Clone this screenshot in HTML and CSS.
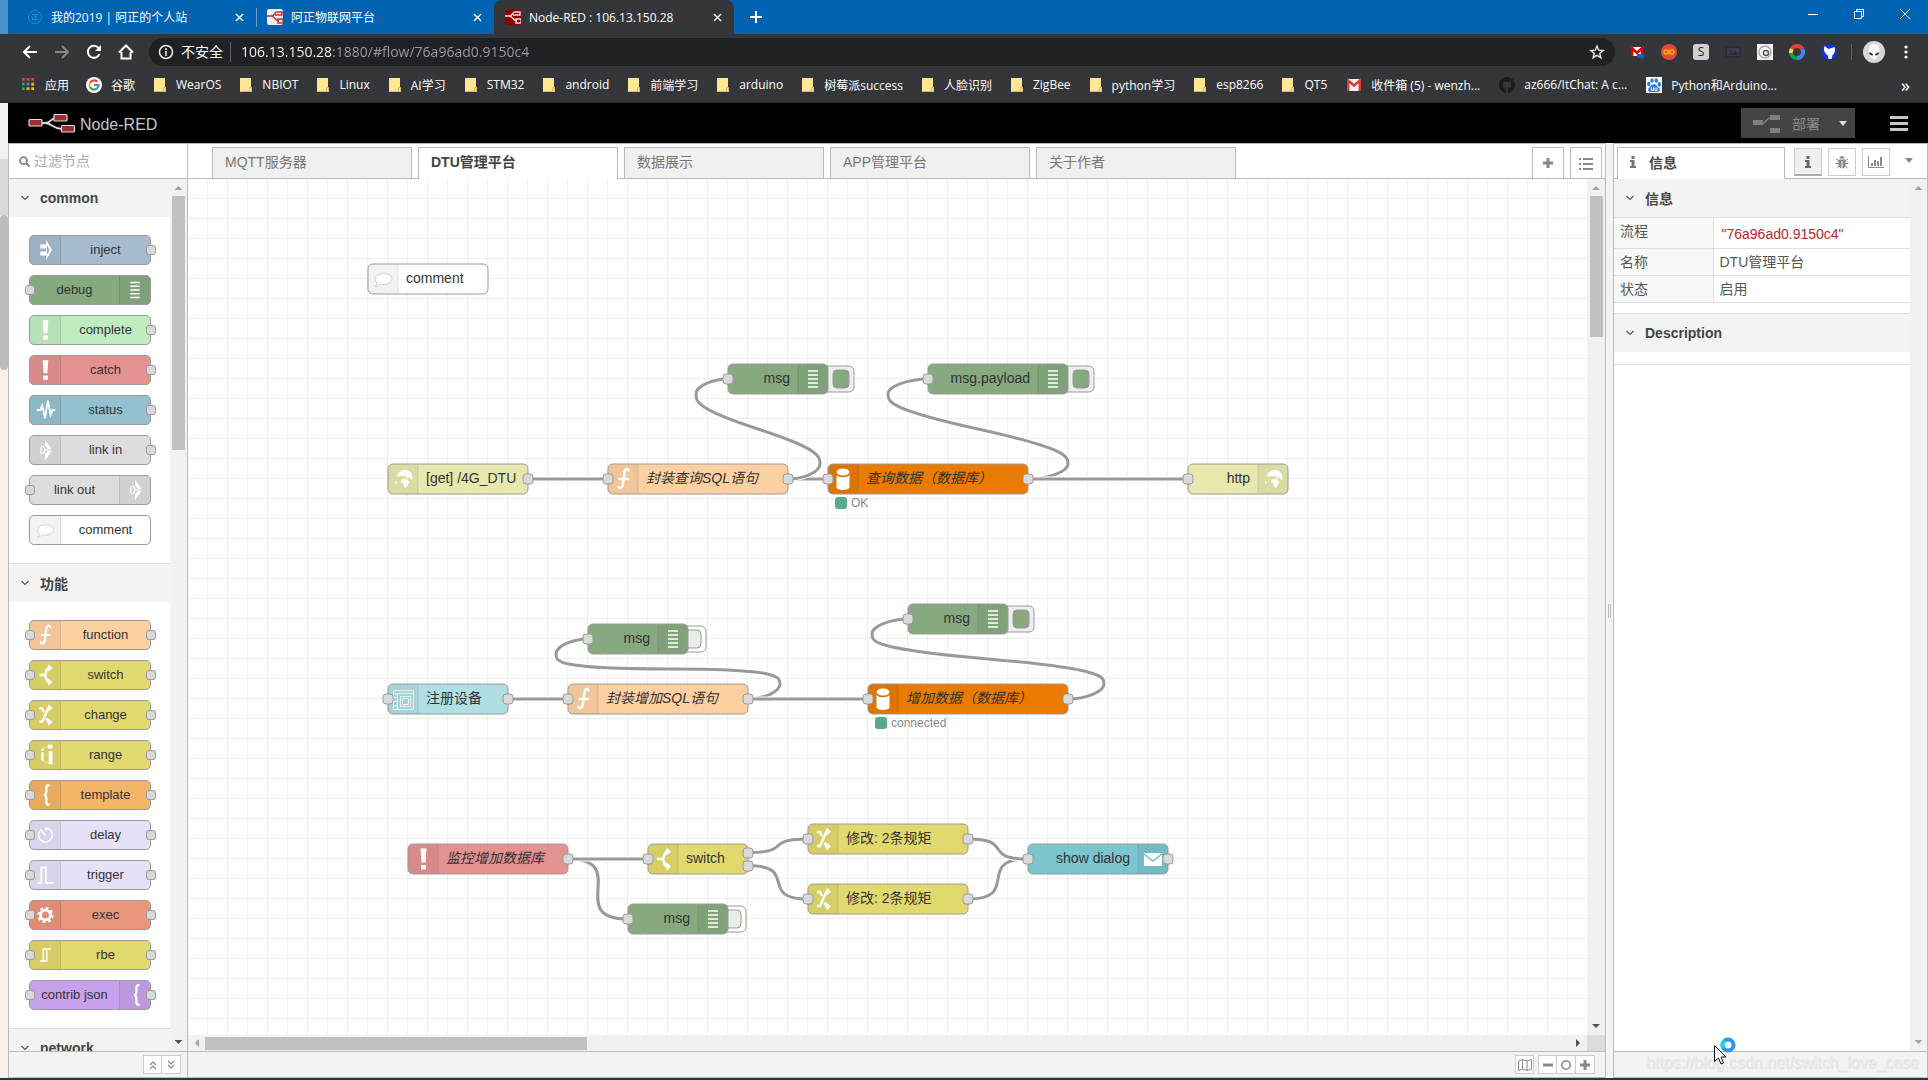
FILE: index.html
```html
<!DOCTYPE html>
<html lang="zh-CN">
  <head>
    <meta charset="UTF-8" />
    <meta name="viewport" content="width=device-width, initial-scale=1.0" />
    <title>Node-RED : 106.13.150.28</title>
    <link rel="stylesheet" href="styles.css">
  </head>
  <body>
    <!-- icon sprite -->
    <svg class="sprite" xmlns="http://www.w3.org/2000/svg">
      <symbol id="i-inject" viewBox="0 0 30 30">
        <path fill="#fff" fill-rule="evenodd" d="M10 9h6V4l6.500 11L16 26v-5h-6v-4.500h6v-3h-6zM17 10v10l3-5z" />
      </symbol>
      <symbol id="i-debug" viewBox="0 0 30 30">
        <path stroke="#fff" stroke-width="1.500" d="M10 7h10M10 11h10M10 15h10M10 19h10M10 23h10" />
      </symbol>
      <symbol id="i-alert" viewBox="0 0 30 30">
        <path fill="#fff" d="M12.500 4.500h6l-1 14h-4zM13 21h5v4.500h-5z" />
      </symbol>
      <symbol id="i-status" viewBox="0 0 30 30">
        <path fill="none" stroke="#fff" stroke-width="2" d="M6 15h4l2-5 3 14 3-19 3 15 2-5h3" />
      </symbol>
      <symbol id="i-link" viewBox="0 0 30 30">
        <path fill="#fff" d="M15 4l7 10h-4c-.5-1.500-1.500-2.500-3-3.500zM15 26l7-10h-4c-.5 1.500-1.500 2.500-3 3.500z" />
        <path fill="none" stroke="#fff" stroke-width="1.300" d="M10.500 11c3 0 4.500 1.500 4.500 4s-1.500 4-4.500 4M10.500 12v6M15 15h6" />
      </symbol>
      <symbol id="i-comment" viewBox="0 0 30 30">
        <path fill="#fff" stroke="#ccc" d="M15.500 9.500c5 0 8.500 2.300 8.500 5.500s-3.500 5.500-8.500 5.500c-1.300 0-2.500-.2-3.500-.5-1 1.300-2.500 2.500-5 2.700 1.500-1 2-2.300 2-3.700C7.600 18 7 16.500 7 15c0-3.200 3.500-5.500 8.500-5.500z" />
      </symbol>
      <symbol id="i-function" viewBox="0 0 30 30">
        <path fill="none" stroke="#fff" stroke-width="2.400" stroke-linecap="round" d="M20.500 6.500C20 4 17 4.500 16.500 8L15 20c-.5 4-3 5-4.500 3M11.500 15h8.500" />
      </symbol>
      <symbol id="i-switch" viewBox="0 0 30 30">
        <path fill="none" stroke="#fff" stroke-width="2.600" d="M9 15h5.500c2 0 1-7.500 5-7.500M14 15c2.500 0 1.500 7.500 5.500 7.500" />
        <path fill="#fff" d="M18.500 3.500L23 7.500l-4.500 4zM18.500 18.500l4.500 4-4.500 4z" />
      </symbol>
      <symbol id="i-change" viewBox="0 0 30 30">
        <path fill="none" stroke="#fff" stroke-width="2.400" d="M9 8h3l2 4M19.500 22.500h-1l-2-4M9 22h3l6.500-14.500h1" />
        <path fill="#fff" d="M18.500 3.500L23 7.500l-4.500 4zM18.500 18.500l4.500 4-4.500 4z" />
      </symbol>
      <symbol id="i-range" viewBox="0 0 30 30">
        <path fill="#fff" d="M11 8h2.500v2.500H11zM11 12h2.500v9H11zM18 4h5v4h-5zM19 11h4v14h-4z" />
        <path stroke="#fff" stroke-width=".8" stroke-dasharray="2 1" d="M13 8l6-3M13 21l6 3" />
      </symbol>
      <symbol id="i-brace" viewBox="0 0 30 30">
        <path fill="none" stroke="#fff" stroke-width="2.400" d="M20 4.500h-1c-2 0-2.500 1-2.500 3v4c0 2-.5 3-2.500 3.500 2 .5 2.500 1.500 2.500 3.500v4c0 2 .5 3 2.500 3h1" />
      </symbol>
      <symbol id="i-delay" viewBox="0 0 30 30">
        <path fill="none" stroke="#fff" stroke-width="1.600" d="M9.500 10.500A7.500 7.500 0 1 0 16 7.500V10M10 9.500l5.500 5.500" />
      </symbol>
      <symbol id="i-trigger" viewBox="0 0 30 30">
        <path fill="none" stroke="#fff" stroke-width="2" d="M7 23.500h4V7h5v16.500h8" />
      </symbol>
      <symbol id="i-exec" viewBox="0 0 30 30">
        <circle cx="15.500" cy="15" r="5.300" fill="none" stroke="#fff" stroke-width="3" />
        <circle cx="15.500" cy="15" r="7.500" fill="none" stroke="#fff" stroke-width="2.400" stroke-dasharray="3 2.890" />
      </symbol>
      <symbol id="i-rbe" viewBox="0 0 30 30">
        <path fill="none" stroke="#fff" stroke-width="1.500" d="M9.500 21.500h7.500V8.500h4.500M13 21.500v-13h4" />
      </symbol>
      <symbol id="i-globe" viewBox="0 0 30 30">
        <path fill="#fff" d="M9 12c.5-3 4-6 8-6 4.500 0 8 4 7.500 9l-1.500 1-1.500-3-2 1.500-2-2.500-2.500.5-1.500-1-2 1.500zM13 16l3-1.500 3 .5 1.500 2.500H22l-2 2.500-1 2.500-2 1.500-1.500-3v-2l-2.500-.5zM7 17l1.500 1v2.500L7 19z" />
      </symbol>
      <symbol id="i-db" viewBox="0 0 30 30">
        <ellipse cx="15" cy="8" rx="6.500" ry="3.500" fill="#fff" />
        <path fill="#fff" d="M8.500 11c2 3 11 3 13 0v12c0 4-13 4-13 0z" />
      </symbol>
      <symbol id="i-subflow" viewBox="0 0 30 30">
        <path fill="none" stroke="#fff" opacity=".7" d="M5.500 6.500h20v19h-20zM5 9.500h20M9.500 10v15M12.500 12.500h10v10h-10zM14.500 14.500h6v6h-6zM6 13.500h3M6 17.500h3M6 21.500h3" />
      </symbol>
      <symbol id="i-mail" viewBox="0 0 30 30">
        <path fill="#fff" d="M6 9h18v13H6z" />
        <path fill="none" stroke="#73bcc5" stroke-width="1.500" d="M6 10l9 7 9-7" />
      </symbol>
      <symbol id="i-port" viewBox="0 0 12 12">
        <rect x="1" y="1" width="10" height="10" rx="3" fill="#d9d9d9" stroke="#999" />
      </symbol>
      <symbol id="i-chevron" viewBox="0 0 10 10">
        <path fill="none" stroke="#555" stroke-width="1.200" d="M1.500 3L5 6.500 8.500 3" />
      </symbol>
      <symbol id="i-folder" viewBox="0 0 12 16">
        <path fill="#ffe793" d="M0 1h11v9.500l1 .5v4H0z" />
        <path fill="none" stroke="#e5bd43" d="M.5 14.500h9v-4h2v4h-2" />
      </symbol>
      <symbol id="i-close" viewBox="0 0 10 10">
        <path stroke="#fff" stroke-width="1.500" d="M1 1l8 8M9 1L1 9" />
      </symbol>
      <symbol id="i-nodered" viewBox="0 0 16 16">
        <path fill="none" stroke="currentColor" stroke-width="1.400" d="M0 7h4c4 0 3-4 6-4h5v3H8M4 7c4 0 4 5 8 5M11 10h5v4h-5z" />
      </symbol>
    </svg>

    <header class="browser">
      <div class="tabstrip">
        <a class="tab" href="#">
          <svg class="tab__icon" viewBox="0 0 16 16">
            <circle cx="8" cy="8" r="6.500" fill="none" stroke="#1592dc" />
            <path stroke="#1592dc" d="M5 5.500h6M8 5.500v5M5.500 8v2.500M8 8h2.500M4.500 10.500h7" />
          </svg>
          <span class="tab__title">我的2019 | 阿正的个人站</span>
          <svg class="tab__close"><use href="#i-close" /></svg>
        </a>
        <a class="tab tab--second" href="#">
          <svg class="tab__icon tab__icon--white"><use href="#i-nodered" /></svg>
          <span class="tab__title">阿正物联网平台</span>
          <svg class="tab__close"><use href="#i-close" /></svg>
        </a>
        <a class="tab tab--active" href="#">
          <svg class="tab__icon tab__icon--red"><use href="#i-nodered" /></svg>
          <span class="tab__title">Node-RED : 106.13.150.28</span>
          <svg class="tab__close"><use href="#i-close" /></svg>
        </a>
        <button class="tabstrip__new" aria-label="New tab">
          <svg viewBox="0 0 12 12"><path stroke="#fff" stroke-width="2" d="M6 0v12M0 6h12" /></svg>
        </button>
        <div class="window-buttons">
          <button aria-label="Minimize"><svg viewBox="0 0 10 10"><path stroke="#fff" d="M0 5.500h10" /></svg></button>
          <button aria-label="Restore"><svg viewBox="0 0 10 10"><path fill="none" stroke="#fff" d="M.5 2.500h7v7h-7zM2.500 2.500v-2h7v7h-2" /></svg></button>
          <button aria-label="Close"><svg viewBox="0 0 10 10"><path stroke="#fff" d="M0 0l10 10M10 0L0 10" /></svg></button>
        </div>
      </div>

      <div class="toolbar">
        <button class="toolbar__button" aria-label="Back"><svg viewBox="0 0 16 16"><path fill="none" stroke="#fff" stroke-width="2" d="M15 8H2M8 2L2 8l6 6" /></svg></button>
        <button class="toolbar__button" aria-label="Forward"><svg viewBox="0 0 16 16"><path fill="none" stroke="#85868a" stroke-width="2" d="M1 8h13M8 2l6 6-6 6" /></svg></button>
        <button class="toolbar__button" aria-label="Reload"><svg viewBox="0 0 16 16"><path fill="none" stroke="#fff" stroke-width="2" d="M13.500 10A6 6 0 1 1 12.500 4" /><path fill="#fff" d="M15 1v6H9z" /></svg></button>
        <button class="toolbar__button" aria-label="Home"><svg viewBox="0 0 16 16"><path fill="none" stroke="#fff" stroke-width="2" d="M1 8.500L8 1.500l7 7M3.500 8v6.500h9V8" /></svg></button>
        <form class="omnibox">
          <svg class="omnibox__info" viewBox="0 0 16 16"><circle cx="8" cy="8" r="6.500" fill="none" stroke="#e8eaed" stroke-width="1.500" /><path stroke="#e8eaed" stroke-width="1.500" d="M8 4v2M8 7v5" /></svg>
          <label class="omnibox__label" for="address">不安全</label>
          <input class="omnibox__input" id="address" type="text" value="106.13.150.28:1880/#flow/76a96ad0.9150c4" />
          <svg class="omnibox__star" viewBox="0 0 16 16"><path fill="none" stroke="#e8eaed" stroke-width="1.400" d="M8 2l1.700 4.200 4.500.3-3.500 2.900 1.200 4.400L8 11.300l-3.900 2.500 1.200-4.400-3.500-2.900 4.500-.3z" /></svg>
        </form>
        <div class="extensions">
          <svg viewBox="0 0 16 16"><path fill="#fff" d="M2 3h12v9H2z" /><path fill="none" stroke="#d00" stroke-width="2.500" d="M3 12V4l5 5 5-5v8" /><path fill="#1d5bb5" d="M8 10h4V8l4 4-4 4v-2H8z" /></svg>
          <svg viewBox="0 0 16 16"><circle cx="8" cy="8" r="8" fill="#e5493a" /><path fill="none" stroke="#ffb400" stroke-width="1.500" d="M8 8c-2-3-5-2.500-5 0s3 3 5 0 5-2.500 5 0-3 3-5 0z" /></svg>
          <span class="ext-letter">S</span>
          <svg viewBox="0 0 16 16"><path fill="#2c2d3a" d="M0 2h16v12H0z" /><path fill="#3c3d48" d="M2 4h12v8H2z" /><path fill="#2c2d3a" d="M3 11l3-4 2 2 3-2 2 4z" /></svg>
          <svg viewBox="0 0 16 16"><path fill="#f4f4f4" d="M0 0h16v16H0z" /><circle cx="8" cy="8" r="6" fill="none" stroke="#aaa" stroke-width="1.500" /><circle cx="9" cy="9" r="2.500" fill="none" stroke="#555" stroke-width="1.500" /></svg>
          <svg viewBox="0 0 16 16"><g fill="none" stroke-width="4"><path stroke="#db4437" d="M2.800 5A6 6 0 0 1 13.200 5" /><path stroke="#4285f4" d="M13.200 5A6 6 0 0 1 8 14" /><path stroke="#0f9d58" d="M8 14A6 6 0 0 1 2 9" /><path stroke="#ffcd40" d="M2 9a6 6 0 0 1 .8-4" /></g></svg>
          <svg viewBox="0 0 16 16"><circle cx="8" cy="8" r="8" fill="#1433e0" /><path fill="#fff" d="M3.500 2l4 3 6-2c1 4 0 7-2 8l-1 4h-3l-1-4C3 9 2.500 5 3.500 2z" /></svg>
        </div>
        <svg class="avatar" viewBox="0 0 22 22"><circle cx="11" cy="11" r="11" fill="#d6d6d6" /><path fill="#f6f6f6" d="M11 3c5 0 6 5 5 9s-3 7-5 7-4-3-5-7 0-9 5-9z" /><path fill="#222" d="M6 11.500c2 0 4 1 4 3-2 0-4-1-4-3zM16 11.500c-2 0-4 1-4 3 2 0 4-1 4-3z" /></svg>
        <button class="toolbar__menu" aria-label="Menu"><svg viewBox="0 0 4 16"><circle cx="2" cy="3" r="1.600" fill="#fff" /><circle cx="2" cy="8" r="1.600" fill="#fff" /><circle cx="2" cy="13" r="1.600" fill="#fff" /></svg></button>
      </div>

      <nav class="bookmarks">
        <a href="#" class="bookmark bookmark--app">
          <svg viewBox="0 0 14 14"><path fill="#ea4335" d="M0 0h3v3H0zM5 0h3v3H5zM10 0h3v3h-3z" /><path fill="#34a853" d="M0 5h3v3H0z" /><path fill="#4285f4" d="M5 5h3v3H5z" /><path fill="#fbbc05" d="M10 5h3v3h-3zM5 10h3v3H5zM10 10h3v3h-3z" /><path fill="#34a853" d="M0 10h3v3H0z" /></svg>应用</a>
        <a href="#" class="bookmark bookmark--site">
          <svg viewBox="0 0 16 16"><circle cx="8" cy="8" r="8" fill="#fff" /><g fill="none" stroke-width="2.200"><path stroke="#ea4335" d="M4 6a4.500 4.500 0 0 1 7.300-1.200" /><path stroke="#fbbc05" d="M4 6a4.500 4.500 0 0 0 0 4" /><path stroke="#34a853" d="M4 10a4.500 4.500 0 0 0 7 1.500" /><path stroke="#4285f4" d="M11 11.500A4.500 4.500 0 0 0 12.500 8H8" /></g></svg>谷歌</a>
        <a href="#" class="bookmark"><svg><use href="#i-folder" /></svg>WearOS</a>
        <a href="#" class="bookmark"><svg><use href="#i-folder" /></svg>NBIOT</a>
        <a href="#" class="bookmark"><svg><use href="#i-folder" /></svg>Linux</a>
        <a href="#" class="bookmark"><svg><use href="#i-folder" /></svg>AI学习</a>
        <a href="#" class="bookmark"><svg><use href="#i-folder" /></svg>STM32</a>
        <a href="#" class="bookmark"><svg><use href="#i-folder" /></svg>android</a>
        <a href="#" class="bookmark"><svg><use href="#i-folder" /></svg>前端学习</a>
        <a href="#" class="bookmark"><svg><use href="#i-folder" /></svg>arduino</a>
        <a href="#" class="bookmark"><svg><use href="#i-folder" /></svg>树莓派success</a>
        <a href="#" class="bookmark"><svg><use href="#i-folder" /></svg>人脸识别</a>
        <a href="#" class="bookmark"><svg><use href="#i-folder" /></svg>ZigBee</a>
        <a href="#" class="bookmark"><svg><use href="#i-folder" /></svg>python学习</a>
        <a href="#" class="bookmark"><svg><use href="#i-folder" /></svg>esp8266</a>
        <a href="#" class="bookmark"><svg><use href="#i-folder" /></svg>QT5</a>
        <a href="#" class="bookmark bookmark--site">
          <svg viewBox="0 0 16 16"><path fill="#f2f2f2" d="M1 2h14v12H1z" /><path fill="none" stroke="#d93f35" stroke-width="2.500" d="M2.200 14V3.500L8 8.500l5.800-5V14" /></svg>收件箱 (5) - wenzh...</a>
        <a href="#" class="bookmark bookmark--site">
          <svg viewBox="0 0 16 16"><circle cx="8" cy="8" r="8" fill="#1b1c1f" /><path fill="#35363a" d="M4 4l2 1h4l2-1v3c1 3-1 4-3 4.500V16H7v-3l-3-1h2v-.500C4 11 3 9 4 7z" /></svg>az666/ItChat: A c...</a>
        <a href="#" class="bookmark bookmark--site">
          <svg viewBox="0 0 16 16"><path fill="#fff" d="M0 0h16v16H0z" /><g fill="#2a7be0"><ellipse cx="2.800" cy="7" rx="1.700" ry="2.200" /><ellipse cx="6" cy="3.500" rx="1.700" ry="2.300" /><ellipse cx="10.300" cy="3.500" rx="1.700" ry="2.300" /><ellipse cx="13.300" cy="7.200" rx="1.700" ry="2.200" /><path d="M8 7c2 0 3 2.500 5 4s1 4-1.500 4h-7C2 15 1.500 12.500 3 11s3-4 5-4z" /></g><path fill="none" stroke="#fff" d="M5.500 10.500v3h2v-3M9 10.500v3h2v-3" /></svg>Python和Arduino...</a>
        <button class="bookmarks__more" aria-label="More bookmarks">»</button>
      </nav>
    </header>

    <div class="desktop">
      <div class="behind">
        <span class="behind__photo"></span>
        <span class="behind__thumb"></span>
      </div>

      <div class="editor">
        <header class="header">
          <svg class="header__logo" viewBox="0 0 48 20">
            <path fill="none" stroke="#ddd" stroke-width="1.800" d="M14 10h3c7 0 5-5 11-5M17 10c7 0 8 6 17 6" />
            <g fill="#9b2f30" stroke="#ddd" stroke-width="1.200"><rect x="1" y="6.500" width="13" height="6.500" rx="1" /><rect x="26" y="1.500" width="13" height="6.500" rx="1" /><rect x="33.500" y="12.500" width="13" height="6.500" rx="1" /></g>
          </svg>
          <span class="header__title">Node-RED</span>
          <button class="deploy">
            <svg class="deploy__icon" viewBox="0 0 28 20"><path fill="#7f7f7f" d="M0 7h10v5H0zM17 2h10v5H17zM17 15h10v5H17z" /><path fill="none" stroke="#7f7f7f" stroke-width="1.500" d="M10 10c4 0 3-5 7-5" /></svg>
            部署
            <span class="caret caret--light"></span>
          </button>
          <button class="header__menu" aria-label="Main menu"><span></span><span></span><span></span></button>
        </header>

        <aside class="palette">
          <div class="palette__search">
            <label for="filter" aria-label="过滤节点"><svg viewBox="0 0 12 12"><circle cx="5" cy="5" r="3.800" fill="none" stroke="#888" stroke-width="2" /><path stroke="#888" stroke-width="2.200" d="M8 8l3.500 3.500" /></svg></label>
            <input id="filter" type="text" placeholder="过滤节点" />
          </div>
          <div class="palette__body">
            <div class="palette__list">
              <section class="category">
                <h2 class="section-title"><svg><use href="#i-chevron" /></svg>common</h2>
                <div class="category__nodes">
                  <div class="node node--inject node--out"><svg class="node__icon"><use href="#i-inject" /></svg><span>inject</span></div>
                  <div class="node node--debug node--in node--flip"><svg class="node__icon"><use href="#i-debug" /></svg><span>debug</span></div>
                  <div class="node node--complete node--out"><svg class="node__icon"><use href="#i-alert" /></svg><span>complete</span></div>
                  <div class="node node--catch node--out"><svg class="node__icon"><use href="#i-alert" /></svg><span>catch</span></div>
                  <div class="node node--status node--out"><svg class="node__icon"><use href="#i-status" /></svg><span>status</span></div>
                  <div class="node node--link node--out"><svg class="node__icon"><use href="#i-link" /></svg><span>link in</span></div>
                  <div class="node node--link node--in node--flip"><svg class="node__icon"><use href="#i-link" /></svg><span>link out</span></div>
                  <div class="node node--comment"><svg class="node__icon"><use href="#i-comment" /></svg><span>comment</span></div>
                </div>
              </section>
              <section class="category">
                <h2 class="section-title"><svg><use href="#i-chevron" /></svg>功能</h2>
                <div class="category__nodes">
                  <div class="node node--function node--in node--out"><svg class="node__icon"><use href="#i-function" /></svg><span>function</span></div>
                  <div class="node node--yellow node--in node--out"><svg class="node__icon"><use href="#i-switch" /></svg><span>switch</span></div>
                  <div class="node node--yellow node--in node--out"><svg class="node__icon"><use href="#i-change" /></svg><span>change</span></div>
                  <div class="node node--yellow node--in node--out"><svg class="node__icon"><use href="#i-range" /></svg><span>range</span></div>
                  <div class="node node--template node--in node--out"><svg class="node__icon"><use href="#i-brace" /></svg><span>template</span></div>
                  <div class="node node--delay node--in node--out"><svg class="node__icon"><use href="#i-delay" /></svg><span>delay</span></div>
                  <div class="node node--delay node--in node--out"><svg class="node__icon"><use href="#i-trigger" /></svg><span>trigger</span></div>
                  <div class="node node--exec node--in node--out"><svg class="node__icon"><use href="#i-exec" /></svg><span>exec</span></div>
                  <div class="node node--yellow node--in node--out"><svg class="node__icon"><use href="#i-rbe" /></svg><span>rbe</span></div>
                  <div class="node node--json node--in node--out node--flip"><svg class="node__icon"><use href="#i-brace" /></svg><span>contrib json</span></div>
                </div>
              </section>
              <section class="category">
                <h2 class="section-title"><svg><use href="#i-chevron" /></svg>network</h2>
              </section>
            </div>
            <div class="scrollbar">
              <span class="arrow arrow--up"></span>
              <span class="scrollbar__thumb scrollbar__thumb--palette"></span>
              <span class="arrow arrow--down arrow--dark"></span>
            </div>
          </div>
          <footer class="footer">
            <div class="button-group">
              <button aria-label="Collapse all"><svg viewBox="0 0 10 10"><path fill="none" stroke="#888" stroke-width="1.200" d="M2 5l3-3 3 3M2 9l3-3 3 3" /></svg></button>
              <button aria-label="Expand all"><svg viewBox="0 0 10 10"><path fill="none" stroke="#888" stroke-width="1.200" d="M2 1l3 3 3-3M2 5l3 3 3-3" /></svg></button>
            </div>
          </footer>
        </aside>

        <main class="workspace">
          <nav class="flow-tabs">
            <a class="flow-tab" href="#">MQTT服务器</a>
            <a class="flow-tab flow-tab--active" href="#">DTU管理平台</a>
            <a class="flow-tab" href="#">数据展示</a>
            <a class="flow-tab" href="#">APP管理平台</a>
            <a class="flow-tab" href="#">关于作者</a>
            <div class="flow-tabs__buttons">
              <button aria-label="Add flow"><svg viewBox="0 0 14 14"><path stroke="#888" stroke-width="3" d="M7 2v10M2 7h10" /></svg></button>
              <button aria-label="List flows"><svg viewBox="0 0 14 14"><path stroke="#888" stroke-width="2" d="M0 3h2M4 3h10M0 8h2M4 8h10M0 13h2M4 13h10" /></svg></button>
            </div>
          </nav>
          <div class="chart">
            <div class="chart__canvas">
              <svg class="flow" xmlns="http://www.w3.org/2000/svg">
                <defs>
                  <g id="debug-on">
                    <rect class="flow-button" x="-6" y="2" width="32" height="26" rx="5" />
                    <rect class="flow-button__inner" x="5" y="6" width="16" height="18" rx="4" />
                  </g>
                  <g id="debug-off">
                    <rect class="flow-button flow-button--off" x="-14" y="2" width="32" height="26" rx="5" />
                    <rect class="flow-button__inner flow-button__inner--off" x="-3" y="6" width="16" height="18" rx="4" />
                  </g>
                  <path id="shade" d="M5 .5h25v29H5q-4.500 0-4.500-4.500V5Q.5.5 5 .5z" fill-opacity=".05" />
                  <path id="shade-right" d="M-30 .5h25q4.500 0 4.500 4.500v20q0 4.500-4.500 4.500h-25z" fill-opacity=".05" />
                  <path id="divider" d="M30 .5v29" stroke="#000" stroke-opacity=".1" />
                </defs>

                <!-- wires: white outline under a grey line -->
                <g class="wire"><path d="M340 300H420" /><path d="M340 300H420" /></g>
                <g class="wire"><path d="M600 300H640" /><path d="M600 300H640" /></g>
                <g class="wire">
                  <path d="M600 300C616 300 632 292.500 632 285S632 270 570 250S508 222.500 508 215S524 200 540 200" />
                  <path d="M600 300C616 300 632 292.500 632 285S632 270 570 250S508 222.500 508 215S524 200 540 200" />
                </g>
                <g class="wire">
                  <path d="M840 300C860 300 880 292.500 880 285S880 270 790 250S700 222.500 700 215S720 200 740 200" />
                  <path d="M840 300C860 300 880 292.500 880 285S880 270 790 250S700 222.500 700 215S720 200 740 200" />
                </g>
                <g class="wire"><path d="M840 300H1000" /><path d="M840 300H1000" /></g>
                <g class="wire"><path d="M320 520H380" /><path d="M320 520H380" /></g>
                <g class="wire">
                  <path d="M560 520C576 520 592 512.500 592 505S592 490 480 490S368 482.500 368 475S384 460 400 460" />
                  <path d="M560 520C576 520 592 512.500 592 505S592 490 480 490S368 482.500 368 475S384 460 400 460" />
                </g>
                <g class="wire"><path d="M560 520H680" /><path d="M560 520H680" /></g>
                <g class="wire">
                  <path d="M880 520C898 520 916 512.500 916 505S916 490 800 480S684 462.500 684 455S702 440 720 440" />
                  <path d="M880 520C898 520 916 512.500 916 505S916 490 800 480S684 462.500 684 455S702 440 720 440" />
                </g>
                <g class="wire"><path d="M380 680C444 680 376 740 440 740" /><path d="M380 680C444 680 376 740 440 740" /></g>
                <g class="wire"><path d="M380 680H460" /><path d="M380 680H460" /></g>
                <g class="wire"><path d="M560 673.500C606 673.500 574 660 620 660" /><path d="M560 673.500C606 673.500 574 660 620 660" /></g>
                <g class="wire"><path d="M560 686.500C612 686.500 569 720 620 720" /><path d="M560 686.500C612 686.500 569 720 620 720" /></g>
                <g class="wire"><path d="M780 720C834 720 786 680 840 680" /><path d="M780 720C834 720 786 680 840 680" /></g>
                <g class="wire"><path d="M780 660C827 660 793 680 840 680" /><path d="M780 660C827 660 793 680 840 680" /></g>

                <g class="flow-node" transform="translate(180 85)">
                  <rect class="fill-white" width="120" height="30" rx="5" />
                  <use href="#shade" /><use href="#divider" />
                  <use href="#i-comment" width="30" height="30" />
                  <text x="38" y="19">comment</text>
                </g>

                <!-- query flow -->
                <g class="flow-node" transform="translate(540 185)">
                  <use href="#debug-on" x="100" />
                  <rect class="fill-debug" width="100" height="30" rx="5" />
                  <use href="#shade-right" x="100" /><use href="#divider" x="40" />
                  <use href="#i-debug" x="70" width="30" height="30" />
                  <text class="end" x="62" y="19">msg</text>
                  <use href="#i-port" x="-6" y="9" width="12" height="12" />
                </g>
                <g class="flow-node" transform="translate(740 185)">
                  <use href="#debug-on" x="140" />
                  <rect class="fill-debug" width="140" height="30" rx="5" />
                  <use href="#shade-right" x="140" /><use href="#divider" x="80" />
                  <use href="#i-debug" x="110" width="30" height="30" />
                  <text class="end" x="102" y="19">msg.payload</text>
                  <use href="#i-port" x="-6" y="9" width="12" height="12" />
                </g>
                <g class="flow-node" transform="translate(200 285)">
                  <rect class="fill-http" width="140" height="30" rx="5" />
                  <use href="#shade" /><use href="#divider" />
                  <use href="#i-globe" width="30" height="30" />
                  <text x="38" y="19">[get] /4G_DTU</text>
                  <use href="#i-port" x="134" y="9" width="12" height="12" />
                </g>
                <g class="flow-node" transform="translate(420 285)">
                  <rect class="fill-function" width="180" height="30" rx="5" />
                  <use href="#shade" /><use href="#divider" />
                  <use href="#i-function" width="30" height="30" />
                  <text class="italic" x="38" y="19">封装查询SQL语句</text>
                  <use href="#i-port" x="-6" y="9" width="12" height="12" />
                  <use href="#i-port" x="174" y="9" width="12" height="12" />
                </g>
                <g class="flow-node" transform="translate(640 285)">
                  <rect class="fill-db" width="200" height="30" rx="5" />
                  <use href="#shade" /><use href="#divider" />
                  <use href="#i-db" width="30" height="30" />
                  <text class="italic" x="38" y="19">查询数据（数据库）</text>
                  <use href="#i-port" x="-6" y="9" width="12" height="12" />
                  <use href="#i-port" x="194" y="9" width="12" height="12" />
                  <rect class="status-dot" x="7" y="33" width="12" height="12" rx="3" />
                  <text class="status-text" x="23" y="43">OK</text>
                </g>
                <g class="flow-node" transform="translate(1000 285)">
                  <rect class="fill-http" width="100" height="30" rx="5" />
                  <use href="#shade-right" x="100" /><use href="#divider" x="40" />
                  <use href="#i-globe" x="70" width="30" height="30" />
                  <text class="end" x="62" y="19">http</text>
                  <use href="#i-port" x="-6" y="9" width="12" height="12" />
                </g>

                <!-- register flow -->
                <g class="flow-node" transform="translate(400 445)">
                  <use href="#debug-off" x="100" />
                  <rect class="fill-debug" width="100" height="30" rx="5" />
                  <use href="#shade-right" x="100" /><use href="#divider" x="40" />
                  <use href="#i-debug" x="70" width="30" height="30" />
                  <text class="end" x="62" y="19">msg</text>
                  <use href="#i-port" x="-6" y="9" width="12" height="12" />
                </g>
                <g class="flow-node" transform="translate(720 425)">
                  <use href="#debug-on" x="100" />
                  <rect class="fill-debug" width="100" height="30" rx="5" />
                  <use href="#shade-right" x="100" /><use href="#divider" x="40" />
                  <use href="#i-debug" x="70" width="30" height="30" />
                  <text class="end" x="62" y="19">msg</text>
                  <use href="#i-port" x="-6" y="9" width="12" height="12" />
                </g>
                <g class="flow-node" transform="translate(200 505)">
                  <rect class="fill-form" width="120" height="30" rx="5" />
                  <use href="#shade" /><use href="#divider" />
                  <use href="#i-subflow" width="30" height="30" />
                  <text x="38" y="19">注册设备</text>
                  <use href="#i-port" x="-6" y="9" width="12" height="12" />
                  <use href="#i-port" x="114" y="9" width="12" height="12" />
                </g>
                <g class="flow-node" transform="translate(380 505)">
                  <rect class="fill-function" width="180" height="30" rx="5" />
                  <use href="#shade" /><use href="#divider" />
                  <use href="#i-function" width="30" height="30" />
                  <text class="italic" x="38" y="19">封装增加SQL语句</text>
                  <use href="#i-port" x="-6" y="9" width="12" height="12" />
                  <use href="#i-port" x="174" y="9" width="12" height="12" />
                </g>
                <g class="flow-node" transform="translate(680 505)">
                  <rect class="fill-db" width="200" height="30" rx="5" />
                  <use href="#shade" /><use href="#divider" />
                  <use href="#i-db" width="30" height="30" />
                  <text class="italic" x="38" y="19">增加数据（数据库）</text>
                  <use href="#i-port" x="-6" y="9" width="12" height="12" />
                  <use href="#i-port" x="194" y="9" width="12" height="12" />
                  <rect class="status-dot" x="7" y="33" width="12" height="12" rx="3" />
                  <text class="status-text" x="23" y="43">connected</text>
                </g>

                <!-- error handling flow -->
                <g class="flow-node" transform="translate(220 665)">
                  <rect class="fill-catch" width="160" height="30" rx="5" />
                  <use href="#shade" /><use href="#divider" />
                  <use href="#i-alert" width="30" height="30" />
                  <text class="italic" x="38" y="19">监控增加数据库</text>
                  <use href="#i-port" x="154" y="9" width="12" height="12" />
                </g>
                <g class="flow-node" transform="translate(460 665)">
                  <rect class="fill-yellow" width="100" height="30" rx="5" />
                  <use href="#shade" /><use href="#divider" />
                  <use href="#i-switch" width="30" height="30" />
                  <text x="38" y="19">switch</text>
                  <use href="#i-port" x="-6" y="9" width="12" height="12" />
                  <use href="#i-port" x="94" y="3" width="12" height="12" />
                  <use href="#i-port" x="94" y="16" width="12" height="12" />
                </g>
                <g class="flow-node" transform="translate(620 645)">
                  <rect class="fill-yellow" width="160" height="30" rx="5" />
                  <use href="#shade" /><use href="#divider" />
                  <use href="#i-change" width="30" height="30" />
                  <text x="38" y="19">修改: 2条规矩</text>
                  <use href="#i-port" x="-6" y="9" width="12" height="12" />
                  <use href="#i-port" x="154" y="9" width="12" height="12" />
                </g>
                <g class="flow-node" transform="translate(620 705)">
                  <rect class="fill-yellow" width="160" height="30" rx="5" />
                  <use href="#shade" /><use href="#divider" />
                  <use href="#i-change" width="30" height="30" />
                  <text x="38" y="19">修改: 2条规矩</text>
                  <use href="#i-port" x="-6" y="9" width="12" height="12" />
                  <use href="#i-port" x="154" y="9" width="12" height="12" />
                </g>
                <g class="flow-node" transform="translate(840 665)">
                  <rect class="fill-dialog" width="140" height="30" rx="5" />
                  <use href="#shade-right" x="140" /><use href="#divider" x="80" />
                  <use href="#i-mail" x="110" width="30" height="30" />
                  <text class="end" x="102" y="19">show dialog</text>
                  <use href="#i-port" x="-6" y="9" width="12" height="12" />
                  <use href="#i-port" x="134" y="9" width="12" height="12" />
                </g>
                <g class="flow-node" transform="translate(440 725)">
                  <use href="#debug-off" x="100" />
                  <rect class="fill-debug" width="100" height="30" rx="5" />
                  <use href="#shade-right" x="100" /><use href="#divider" x="40" />
                  <use href="#i-debug" x="70" width="30" height="30" />
                  <text class="end" x="62" y="19">msg</text>
                  <use href="#i-port" x="-6" y="9" width="12" height="12" />
                </g>
              </svg>
            </div>
            <div class="scrollbar">
              <span class="arrow arrow--up"></span>
              <span class="scrollbar__thumb scrollbar__thumb--chart"></span>
              <span class="arrow arrow--down arrow--dark"></span>
            </div>
            <div class="scrollbar scrollbar--horizontal">
              <span class="arrow arrow--left"></span>
              <span class="scrollbar__thumb scrollbar__thumb--wide"></span>
              <span class="arrow arrow--right arrow--dark"></span>
            </div>
            <div class="chart__corner"></div>
          </div>
          <footer class="footer">
            <div class="button-group">
              <button aria-label="Toggle navigator"><svg viewBox="0 0 14 12"><path fill="none" stroke="#888" d="M.5 2l4-1.500 4.500 1.500 4.500-1.500v9.500L9 11.500 4.500 10l-4 1.500zM4.500.5V10M9 2v9.500" /></svg></button>
            </div>
            <div class="button-group">
              <button aria-label="Zoom out"><svg viewBox="0 0 10 10"><path stroke="#888" stroke-width="3" d="M0 5h10" /></svg></button>
              <button aria-label="Reset zoom"><svg viewBox="0 0 10 10"><circle cx="5" cy="5" r="4.200" fill="none" stroke="#888" stroke-width="1.500" /></svg></button>
              <button aria-label="Zoom in"><svg viewBox="0 0 10 10"><path stroke="#888" stroke-width="3" d="M0 5h10M5 0v10" /></svg></button>
            </div>
          </footer>
        </main>

        <div class="separator"><span></span></div>

        <aside class="sidebar">
          <div class="sidebar__tabs">
            <a class="sidebar__tab" href="#"><svg viewBox="0 0 8 12"><path fill="#777" d="M2.500 0h3v3h-3zM1 4h4.500v6H7v2H1v-2h1.500V6H1z" /></svg>信息</a>
            <button class="sidebar__button sidebar__button--active" aria-label="Info"><svg viewBox="0 0 14 14"><path fill="#666" d="M5.500 1h3v3h-3zM4 5h4.500v6H10v2H4v-2h1.500V7H4z" /></svg></button>
            <button class="sidebar__button" aria-label="Debug"><svg viewBox="0 0 14 14"><path fill="#888" d="M4.500 3.500a2.500 2.500 0 0 1 5 0zM3.500 4.500h7v6q-1 3-3 3V6h-1v7.500q-2 0-3-3z" /><path stroke="#888" d="M1 4l3 2M13 4l-3 2M.5 8.500H4M13.500 8.500H10M1.500 13L4 11M12.500 13L10 11" /></svg></button>
            <button class="sidebar__button" aria-label="Dashboard"><svg viewBox="0 0 16 14"><path fill="none" stroke="#888" d="M.5 1v11.500H16" /><path stroke="#888" stroke-width="2" d="M4 11V8M7 11V5M10 11V6M13 11V2" /></svg></button>
            <button class="sidebar__more" aria-label="More"><span class="caret"></span></button>
          </div>
          <div class="sidebar__body">
            <div class="sidebar__content">
              <h2 class="section-title"><svg><use href="#i-chevron" /></svg>信息</h2>
              <table class="info">
                <tr><th>流程</th><td class="info__id">"76a96ad0.9150c4"</td></tr>
                <tr><th>名称</th><td>DTU管理平台</td></tr>
                <tr><th>状态</th><td>启用</td></tr>
              </table>
              <h2 class="section-title section-title--ruled"><svg><use href="#i-chevron" /></svg>Description</h2>
              <div class="description"></div>
            </div>
            <div class="scrollbar">
              <span class="arrow arrow--up"></span>
              <span class="arrow arrow--down"></span>
            </div>
          </div>
          <footer class="footer footer--sidebar">
            <span class="watermark">https://blog.csdn.net/switch_love_case</span>
            <svg class="cursor" viewBox="0 0 26 28">
              <path fill="#fff" stroke="#112" d="M1.500 8.500v16l4-3.500 2.500 6 2.500-1-2.500-6h5z" />
              <circle cx="15" cy="8" r="5.500" fill="none" stroke="#2b95f0" stroke-width="4" />
              <path fill="none" stroke="#2bcdf8" stroke-width="4" d="M10 10.500a5.500 5.500 0 0 1 2-7" />
            </svg>
          </footer>
        </aside>
      </div>
    </div>
  </body>
</html>
```
FILE: styles.css
```css
*,
*::before,
*::after {
  margin: 0;
  padding: 0;
  box-sizing: border-box;
}
body {
  display: flex;
  flex-direction: column;
  height: 100vh;
  overflow: hidden;
  padding-bottom: 2px;
  background-color: #1f3a48;
  font-family: "Liberation Sans", "Noto Sans CJK SC", sans-serif;
  font-size: 14px;
  color: #444;
}
button,
input {
  font: inherit;
  color: inherit;
  border: none;
  background: none;
}
button {
  cursor: pointer;
}
a {
  color: inherit;
  text-decoration: none;
}
svg {
  display: block;
  flex-shrink: 0;
}
.sprite {
  position: absolute;
  width: 0;
  height: 0;
}

/* Browser chrome */
.browser {
  font-family: "Open Sans", "Noto Sans CJK SC", sans-serif;
  font-size: 12px;
  color: #fff;
  background-color: #35363a;
}
.tabstrip {
  display: flex;
  height: 34px;
  background-color: #0063b1;
  border-left: 8px solid #4a90cb;
}
.tab {
  display: flex;
  align-items: center;
  width: 238px;
  padding: 0 12px 0 11px;
}
.tab:first-child {
  width: 248px;
  padding-left: 19px;
}
.tab--second {
  position: relative;
}
.tab--second::before {
  content: "";
  position: absolute;
  left: 0;
  top: 8px;
  width: 1px;
  height: 19px;
  background-color: #66a1d0;
}
.tab--active {
  width: 240px;
  background-color: #35363a;
  border-radius: 8px 8px 0 0;
}
.tab__icon {
  width: 16px;
  height: 16px;
}
.tab__icon--white {
  background-color: #f5eded;
  border-radius: 2px;
  color: #b23a3a;
}
.tab__icon--red {
  background-color: #8f0000;
  border-radius: 2px;
  color: #f3dcdc;
}
.tab__title {
  flex: 1;
  margin-left: 8px;
  white-space: nowrap;
}
.tab__close {
  width: 9px;
  height: 9px;
}
.tabstrip__new {
  padding: 0 16px;
}
.tabstrip__new svg {
  width: 12px;
  height: 12px;
}
.window-buttons {
  display: flex;
  margin-left: auto;
  height: 28px;
}
.window-buttons button {
  width: 46px;
}
.window-buttons svg {
  width: 10px;
  height: 10px;
  margin: 0 auto;
}
.toolbar {
  display: flex;
  align-items: center;
  height: 36px;
  padding: 0 20px 0 14px;
}
.toolbar__button {
  width: 32px;
}
.toolbar__button svg {
  width: 16px;
  height: 16px;
  margin: 0 auto;
}
.omnibox {
  flex: 1;
  display: flex;
  align-items: center;
  height: 28px;
  margin-left: 7px;
  padding: 0 10px 0 9px;
  border-radius: 14px;
  background-color: #202124;
  font-size: 14px;
}
.omnibox__info,
.omnibox__star {
  width: 16px;
  height: 16px;
}
.omnibox__label {
  margin-left: 7px;
  padding-right: 7px;
  border-right: 1px solid #5f6368;
  line-height: 20px;
}
.omnibox__input {
  flex: 1;
  margin-left: 10px;
  padding-bottom: 1px;
  outline: none;
  color: transparent;
  background-image: linear-gradient(90deg, #fff 91px, #9aa0a6 91px);
  -webkit-background-clip: text;
  background-clip: text;
}
.extensions {
  display: flex;
  gap: 16px;
  margin-left: 14px;
  padding-right: 14px;
  border-right: 1px solid #5f6368;
}
.extensions svg,
.ext-letter {
  width: 16px;
  height: 16px;
}
.ext-letter {
  border-radius: 3px;
  background-color: #d0d0d0;
  color: #222;
  line-height: 16px;
  text-align: center;
}
.avatar {
  width: 22px;
  height: 22px;
  margin-left: 11px;
}
.toolbar__menu {
  margin-left: 19px;
}
.toolbar__menu svg {
  width: 4px;
  height: 16px;
}
.bookmarks {
  display: flex;
  align-items: center;
  gap: 19px;
  height: 33px;
  padding: 0 18px 3px 22px;
  border-bottom: 1px solid #29292c;
}
.bookmark {
  display: flex;
  align-items: center;
  gap: 10px;
  white-space: nowrap;
}
.bookmark svg {
  width: 12px;
  height: 16px;
}
.bookmark--app {
  margin-right: -2px;
}
.bookmark--app svg {
  width: 13px;
  height: 13px;
}
.bookmark--site {
  gap: 9px;
}
.bookmark--site svg {
  width: 16px;
  height: 16px;
}
.bookmarks__more {
  margin-left: auto;
  font-size: 18px;
  line-height: 20px;
}

/* The strip of the window behind the browser */
.desktop {
  flex: 1;
  display: flex;
  min-height: 0;
}
.behind {
  width: 8px;
  padding-top: 56px;
  background: linear-gradient(#f3f3f3 56px, #faf0ea 56px);
}
.behind__photo {
  display: block;
  height: 56px;
  background-color: #dfd7d1;
}
.behind__thumb {
  display: block;
  height: 155px;
  border-radius: 4px;
  background-color: #bbb;
}

/* Editor */
.editor {
  flex: 1;
  display: grid;
  grid-template-columns: 180px 1fr 7px 315px;
  grid-template-rows: 40px 1fr;
  min-width: 0;
  background-color: #f3f3f3;
}
.header {
  grid-column: 1 / -1;
  display: flex;
  align-items: center;
  padding: 0 20px;
  background-color: #000;
}
.header__logo {
  width: 48px;
  height: 20px;
}
.header__title {
  margin-left: 4px;
  padding-top: 3px;
  font-size: 16px;
  color: #c7c7c7;
}
.deploy {
  display: flex;
  align-items: center;
  height: 30px;
  margin-left: auto;
  padding: 0 8px 0 12px;
  background-color: #444;
  color: #8a8a8a;
}
.deploy__icon {
  width: 28px;
  height: 20px;
  margin-right: 11px;
}
.caret {
  border: 4px solid transparent;
  border-top: 5px solid #888;
  border-bottom: none;
}
.caret--light {
  margin-left: 19px;
  border-top-color: #ddd;
}
.header__menu {
  display: grid;
  gap: 3px;
  width: 18px;
  margin-left: 35px;
}
.header__menu span {
  height: 3px;
  background-color: #c7c7c7;
}

.palette,
.workspace,
.sidebar {
  display: flex;
  flex-direction: column;
  min-width: 0;
  min-height: 0;
  border: 1px solid #bbb;
  background-color: #fff;
}
.workspace {
  border-left: none;
}
.palette__search {
  display: flex;
  align-items: center;
  height: 35px;
  padding-left: 10px;
  border-bottom: 1px solid #bbb;
}
.palette__search svg {
  width: 11px;
  height: 11px;
}
.palette__search input {
  width: 140px;
  margin-left: 4px;
  outline: none;
}
.palette__search input::placeholder {
  color: #aaa;
}
.palette__body,
.sidebar__body {
  flex: 1;
  display: flex;
  min-height: 0;
}
.palette__list,
.sidebar__content {
  flex: 1;
  overflow: hidden;
}
.section-title {
  display: flex;
  align-items: center;
  gap: 10px;
  height: 38px;
  padding: 0 0 1px 11px;
  background-color: #f3f3f3;
  font-size: 14px;
  font-weight: 700;
}
.section-title svg {
  width: 10px;
  height: 10px;
}
.category + .category {
  border-top: 1px solid #ddd;
}
.category__nodes {
  display: grid;
  gap: 10px;
  padding: 18px 19px 18px 20px;
}
.node {
  position: relative;
  display: flex;
  align-items: center;
  height: 30px;
  border: 1px solid #999;
  border-radius: 5px;
  font-size: 13px;
  color: #333;
}
.node span {
  flex: 1;
  padding-bottom: 2px;
  text-align: center;
}
.node--flip {
  flex-direction: row-reverse;
}
.node__icon {
  width: 31px;
  height: 28px;
  border-right: 1px solid rgba(0, 0, 0, 0.1);
  border-radius: 4px 0 0 4px;
  background-color: rgba(0, 0, 0, 0.05);
}
.node--flip .node__icon {
  border-right: none;
  border-left: 1px solid rgba(0, 0, 0, 0.1);
  border-radius: 0 4px 4px 0;
}
.node--in::before,
.node--out::after {
  content: "";
  position: absolute;
  top: 9px;
  width: 10px;
  height: 10px;
  border: 1px solid #999;
  border-radius: 3px;
  background-color: #d9d9d9;
}
.node--in::before {
  left: -5px;
}
.node--out::after {
  right: -6px;
}
.node--inject { background-color: #a6bbcf; }
.node--debug { background-color: #87a980; }
.node--complete { background-color: #c0edc0; }
.node--catch { background-color: #e49191; }
.node--status { background-color: #94c1d0; }
.node--link { background-color: #ddd; }
.node--comment { background-color: #fff; }
.node--function { background-color: #fdd0a2; }
.node--yellow { background-color: #e2d96e; }
.node--template { background-color: #f3b567; }
.node--delay { background-color: #e6e0f8; }
.node--exec { background-color: #e9967a; }
.node--json { background-color: #c7a1eb; }

/* Scrollbars */
.scrollbar {
  display: flex;
  flex-direction: column;
  align-items: center;
  width: 17px;
  padding: 7px 0;
  background-color: #f1f1f1;
}
.scrollbar--horizontal {
  flex-direction: row;
  width: auto;
  height: 17px;
  padding: 0 7px;
}
.scrollbar__thumb {
  width: 13px;
  background-color: #c1c1c1;
}
.scrollbar__thumb--palette {
  height: 254px;
  margin-top: 6px;
}
.scrollbar__thumb--chart {
  height: 141px;
  margin-top: 6px;
}
.scrollbar__thumb--wide {
  width: 382px;
  height: 13px;
  margin-left: 6px;
}
.arrow {
  width: 8px;
  height: 4px;
  background-color: #a3a3a3;
  clip-path: polygon(50% 0, 100% 100%, 0 100%);
}
.arrow--dark {
  background-color: #505050;
}
.arrow--down {
  margin-top: auto;
  clip-path: polygon(0 0, 100% 0, 50% 100%);
}
.arrow--left,
.arrow--right {
  width: 4px;
  height: 8px;
  clip-path: polygon(0 50%, 100% 0, 100% 100%);
}
.arrow--right {
  margin-left: auto;
  clip-path: polygon(0 0, 100% 50%, 0 100%);
}

/* Footers */
.footer {
  display: flex;
  align-items: center;
  justify-content: flex-end;
  gap: 4px;
  height: 26px;
  padding-right: 6px;
  border-top: 1px solid #bbb;
  background-color: #f3f3f3;
}
.workspace .footer {
  padding-right: 10px;
}
.button-group {
  display: flex;
  border: 1px solid #ccc;
  background-color: #fff;
}
.button-group button {
  width: 17px;
  height: 17px;
}
.button-group button + button {
  width: 19px;
  border-left: 1px solid #ccc;
}
.button-group svg {
  width: 10px;
  height: 10px;
  margin: 0 auto;
}
.button-group:first-child:not(:last-child) svg {
  width: 14px;
  height: 12px;
}

/* Workspace */
.flow-tabs {
  display: flex;
  align-items: flex-end;
  gap: 6px;
  height: 35px;
  padding-left: 24px;
  border-bottom: 1px solid #bbb;
}
.flow-tab {
  width: 200px;
  height: 31px;
  padding-left: 12px;
  border: 1px solid #bbb;
  border-bottom: none;
  background-color: #f0f0f0;
  color: #777;
  line-height: 28px;
}
.flow-tab--active {
  height: 32px;
  margin-bottom: -1px;
  background-color: #fff;
  color: #444;
  font-weight: 700;
}
.flow-tabs__buttons {
  display: flex;
  gap: 6px;
  margin: 0 3px 0 auto;
}
.flow-tabs__buttons button {
  width: 32px;
  height: 31px;
  border: 1px solid #bbb;
  border-bottom: none;
}
.flow-tabs__buttons svg {
  width: 14px;
  height: 14px;
  margin: 0 auto;
}
.chart {
  flex: 1;
  display: grid;
  grid-template-columns: 1fr 18px;
  grid-template-rows: 1fr 16px;
  min-height: 0;
}
.chart .scrollbar {
  width: auto;
  height: auto;
}
.chart__corner {
  background-color: #dcdcdc;
}
.chart__canvas {
  overflow: hidden;
  background-image:
    linear-gradient(90deg, transparent 19px, #eee 19px),
    linear-gradient(transparent 19px, #eee 19px);
  background-size: 20px 20px;
}
.flow {
  width: 100%;
  height: 100%;
}
.flow-node rect {
  stroke: #999;
}
.flow-node text {
  fill: #333;
}
.flow-node .end {
  text-anchor: end;
}
.flow-node .italic {
  font-style: italic;
}
.flow-node .status-dot {
  fill: #5a8;
  stroke: none;
}
.flow-node .status-text {
  font-size: 12px;
  fill: #888;
}
.wire path {
  fill: none;
  stroke: #fff;
  stroke-width: 5px;
}
.wire path + path {
  stroke: #999;
  stroke-width: 3px;
}
.flow-button {
  fill: #eee;
  stroke: #999;
}
.flow-button--off {
  fill: #fff;
}
.flow-button__inner {
  fill: #87a980;
  stroke: #999;
}
.flow-button__inner--off {
  fill-opacity: 0.2;
}
.fill-white { fill: #fff; }
.fill-debug { fill: #87a980; }
.fill-http { fill: #e7e7ae; }
.fill-function { fill: #fdd0a2; }
.fill-db { fill: #e97b00; }
.fill-form { fill: #b0dfe3; }
.fill-catch { fill: #e49191; }
.fill-yellow { fill: #e2d96e; }
.fill-dialog { fill: #79c6cf; }

.separator {
  display: grid;
  place-items: center;
}
.separator span {
  width: 3px;
  height: 14px;
  border: 1px solid #bbb;
  border-width: 0 1px;
}

/* Sidebar */
.sidebar__tabs {
  display: flex;
  gap: 6px;
  height: 35px;
  padding: 3px 11px 0 3px;
  border-bottom: 1px solid #bbb;
}
.sidebar__tab {
  flex: 1;
  display: flex;
  align-items: center;
  gap: 12px;
  height: 32px;
  margin-right: 3px;
  padding: 0 0 4px 11px;
  border: 1px solid #bbb;
  border-bottom: none;
  background-color: #fff;
  font-weight: 700;
}
.sidebar__tab svg {
  width: 8px;
  height: 12px;
}
.sidebar__button {
  width: 28px;
  height: 28px;
  margin-top: 1px;
  border: 1px solid #ccc;
}
.sidebar__button svg {
  width: 16px;
  height: 14px;
  margin: 0 auto;
}
.sidebar__button--active {
  border-bottom: 2px solid #aaa;
  background-color: #efefef;
}
.sidebar__more {
  width: 20px;
  padding: 0 0 4px 9px;
}
.sidebar__more .caret {
  display: block;
  width: 8px;
}
.info {
  width: 100%;
  margin-bottom: 10px;
  border-collapse: collapse;
  line-height: 20px;
}
.info th,
.info td {
  height: 27px;
  padding: 3px 6px;
  border-top: 1px solid #ddd;
  border-bottom: 1px solid #ddd;
  color: #555;
  text-align: left;
}
.info th {
  width: 99px;
  border-right: 1px solid #ddd;
  background-color: #f8f8f8;
  font-weight: 400;
  vertical-align: top;
}
.info .info__id {
  height: 31px;
  padding: 5px 8px 3px;
  color: #b72828;
}
.section-title--ruled {
  height: 39px;
  border-top: 1px solid #ddd;
}
.description {
  height: 13px;
  border-bottom: 1px solid #ddd;
}
.footer--sidebar {
  position: relative;
  padding-right: 8px;
}
.watermark {
  padding-bottom: 4px;
  font-size: 16px;
  line-height: 20px;
  color: #eaeaea;
  text-shadow: 1px 1px 1px #ddd;
}
.cursor {
  position: absolute;
  top: -15px;
  left: 99px;
  width: 26px;
  height: 28px;
}
```
